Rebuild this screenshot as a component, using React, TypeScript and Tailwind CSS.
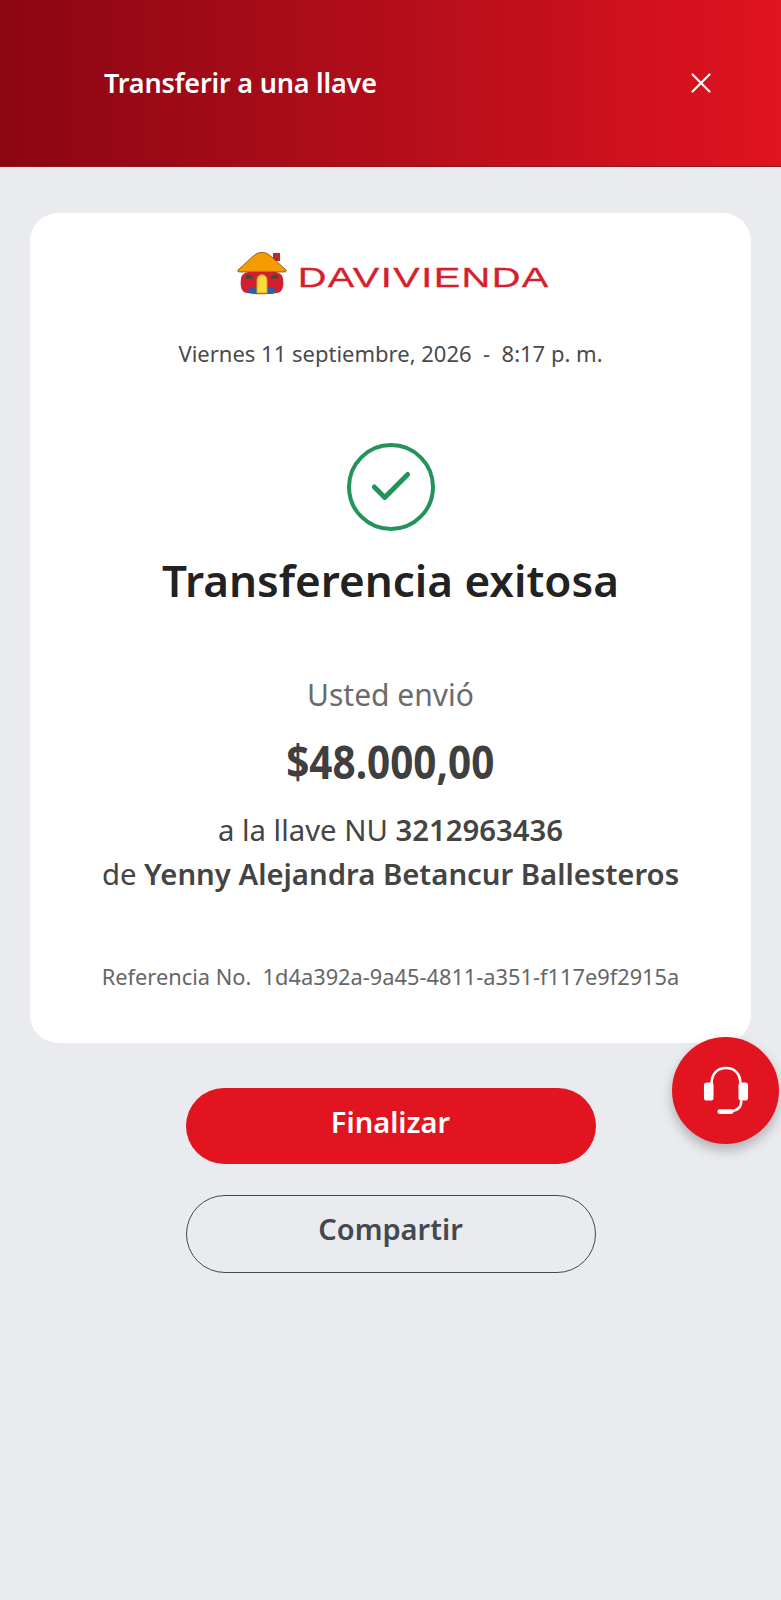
import { X, Check } from 'lucide-react';

const font = { fontFamily: '"Noto Sans", sans-serif' };

const HouseLogo = () => (
  <svg viewBox="0 0 50 43" className="w-[50px] h-[43px] shrink-0">
    <rect x="36" y="1" width="7" height="8" fill="#c8202f" />
    <path d="M1 18 C7 13 13 6 19 2 C22 0 28 0 31 2 C37 6 43 13 49 18 C50 20 48 20 45 20 L5 20 C2 20 0 20 1 18 Z" fill="#f59a00" stroke="#5a3a10" strokeWidth="0.7" />
    <path d="M4 27 C4 22 10 19 16 20 L34 20 C40 19 46 22 46 27 C47 33 46 38 43 40 C38 43 12 43 7 40 C4 38 3 33 4 27 Z" fill="#d01f2e" />
    <path d="M9 24 q3 -3 6 0 l1 3 l-4 -1 l-3 1 Z M41 24 q-3 -3 -6 0 l-1 3 l4 -1 l3 1 Z" fill="#1f5a34" />
    <path d="M11 38 q5 -5 10 -1 l0 4 l-10 0 Z M39 38 q-5 -5 -10 -1 l0 4 l10 0 Z" fill="#2a5ea8" />
    <path d="M20 41 L20 28 C20 21 30 21 30 28 L30 41 Z" fill="#f7dc3e" stroke="#d9a514" strokeWidth="1" />
  </svg>
);

const HeadsetIcon = () => (
  <svg viewBox="0 0 48 52" className="w-[46px] h-[50px]" fill="none">
    <path d="M9 20 V18 C9 8 15 2 24 2 C33 2 39 8 39 18 V20" stroke="white" strokeWidth="2.6" />
    <rect x="1" y="17" width="10" height="19" rx="3" fill="white" />
    <rect x="37" y="17" width="10" height="19" rx="3" fill="white" />
    <path d="M40 36 C40 43 36 47 28 47" stroke="white" strokeWidth="2.6" />
    <rect x="15" y="45" width="17" height="5" rx="2.5" fill="white" />
  </svg>
);

export default function App() {
  return (
    <div className="relative min-h-[1600px] bg-[#e9ebef] overflow-hidden" style={font}>
      <header className="h-[167px] bg-gradient-to-r from-[#8c0614] via-[#b30e1a] to-[#e0131f] border-b border-[#8f1520] flex items-center justify-between pl-[104px] pr-[63px]">
        <h1 className="text-[27px] font-semibold text-white tracking-[-0.2px]">Transferir a una llave</h1>
        <X className="w-[34px] h-[34px] text-white" strokeWidth={1.5} />
      </header>

      <main className="px-[30px] pt-[46px] flex flex-col items-center">
        <section className="w-full h-[830px] bg-white rounded-[28px] flex flex-col items-center pt-[38px]">
          <div className="flex items-center gap-[12px] h-[44px] ml-[5px]">
            <HouseLogo />
            <div className="w-[250px] mt-[10px] flex justify-center">
              <span className="text-[28px] leading-none text-[#d61f2e] tracking-[1px] scale-x-[1.42] [-webkit-text-stroke:0.3px_#d61f2e]" style={{ fontFamily: '"Liberation Sans", sans-serif' }}>
                DAVIVIENDA
              </span>
            </div>
          </div>

          <p className="mt-[42px] text-[22px] leading-[32px] text-[#4a4a4a] whitespace-pre">Viernes 11 septiembre, 2026  -  8:17 p. m.</p>

          <div className="mt-[74px] w-[88px] h-[88px] rounded-full border-4 border-[#24935a] flex items-center justify-center">
            <Check className="w-[50px] h-[50px] text-[#24935a]" strokeWidth={2.4} />
          </div>

          <h2 className="mt-[19px] text-[44px] leading-[60px] font-semibold text-[#222222]">Transferencia exitosa</h2>

          <p className="mt-[65px] text-[30px] leading-[40px] text-[#6b6b6b]">Usted envió</p>
          <p className="mt-[16px] text-[46px] leading-[60px] font-bold text-[#3f3f3f] scale-x-[0.88]">$48.000,00</p>
          <p className="mt-[17px] text-[29.3px] leading-[44px] text-[#444444]">
            a la llave NU <span className="font-semibold">3212963436</span>
          </p>
          <p className="text-[29.3px] leading-[44px] text-[#444444]">
            de <span className="font-semibold">Yenny Alejandra Betancur Ballesteros</span>
          </p>

          <p className="mt-[65px] text-[21.8px] leading-[32px] text-[#666666] whitespace-pre">Referencia No.  1d4a392a-9a45-4811-a351-f117e9f2915a</p>
        </section>

        <button className="mt-[45px] w-[410px] h-[76px] rounded-full bg-[#e1141f] text-white text-[29px] font-semibold pb-[8px]">Finalizar</button>
        <button className="mt-[31px] w-[410px] h-[78px] rounded-full border-[1.5px] border-[#44484f] text-[#44484f] text-[29px] font-semibold pb-[10px]">Compartir</button>
      </main>

      <button className="absolute left-[672px] top-[1037px] w-[107px] h-[107px] rounded-full bg-[#e1141f] shadow-[0_6px_12px_rgba(0,0,0,0.25)] flex items-center justify-center">
        <HeadsetIcon />
      </button>
    </div>
  );
}
